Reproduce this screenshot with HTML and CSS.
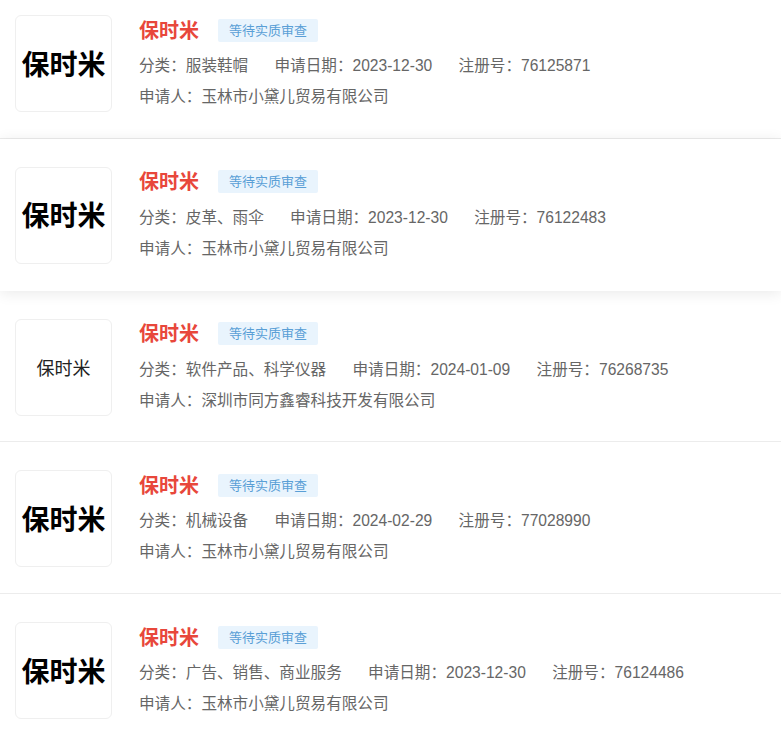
FILE: index.html
```html
<!DOCTYPE html>
<html lang="zh-CN">

<head>
    <meta charset="UTF-8">
    <meta name="viewport" content="width=device-width, initial-scale=1.0">
    <title>商标列表</title>
    <link rel="stylesheet" href="styles.css">
</head>

<body>

    <ul class="tm-list">
        <li class="tm-item">
            <div class="tm-logo tm-logo-bold">保时米</div>
            <div class="tm-info">
                <div class="tm-head">
                    <span class="tm-name">保时米</span>
                    <span class="tm-status">等待实质审查</span>
                </div>
                <div class="tm-meta">
                    <span>分类：服装鞋帽</span>
                    <span>申请日期：2023-12-30</span>
                    <span>注册号：76125871</span>
                </div>
                <div class="tm-meta">
                    <span>申请人：玉林市小黛儿贸易有限公司</span>
                </div>
            </div>
        </li>

        <li class="tm-item hover">
            <div class="tm-logo tm-logo-bold">保时米</div>
            <div class="tm-info">
                <div class="tm-head">
                    <span class="tm-name">保时米</span>
                    <span class="tm-status">等待实质审查</span>
                </div>
                <div class="tm-meta">
                    <span>分类：皮革、雨伞</span>
                    <span>申请日期：2023-12-30</span>
                    <span>注册号：76122483</span>
                </div>
                <div class="tm-meta">
                    <span>申请人：玉林市小黛儿贸易有限公司</span>
                </div>
            </div>
        </li>

        <li class="tm-item">
            <div class="tm-logo tm-logo-thin">保时米</div>
            <div class="tm-info">
                <div class="tm-head">
                    <span class="tm-name">保时米</span>
                    <span class="tm-status">等待实质审查</span>
                </div>
                <div class="tm-meta">
                    <span>分类：软件产品、科学仪器</span>
                    <span>申请日期：2024-01-09</span>
                    <span>注册号：76268735</span>
                </div>
                <div class="tm-meta">
                    <span>申请人：深圳市同方鑫睿科技开发有限公司</span>
                </div>
            </div>
        </li>

        <li class="tm-item">
            <div class="tm-logo tm-logo-bold">保时米</div>
            <div class="tm-info">
                <div class="tm-head">
                    <span class="tm-name">保时米</span>
                    <span class="tm-status">等待实质审查</span>
                </div>
                <div class="tm-meta">
                    <span>分类：机械设备</span>
                    <span>申请日期：2024-02-29</span>
                    <span>注册号：77028990</span>
                </div>
                <div class="tm-meta">
                    <span>申请人：玉林市小黛儿贸易有限公司</span>
                </div>
            </div>
        </li>

        <li class="tm-item">
            <div class="tm-logo tm-logo-bold">保时米</div>
            <div class="tm-info">
                <div class="tm-head">
                    <span class="tm-name">保时米</span>
                    <span class="tm-status">等待实质审查</span>
                </div>
                <div class="tm-meta">
                    <span>分类：广告、销售、商业服务</span>
                    <span>申请日期：2023-12-30</span>
                    <span>注册号：76124486</span>
                </div>
                <div class="tm-meta">
                    <span>申请人：玉林市小黛儿贸易有限公司</span>
                </div>
            </div>
        </li>
    </ul>

</body>

</html>
```

FILE: styles.css
```css
body {
    margin: 0;
    font-family: 'Liberation Sans', Arial, 'Noto Sans CJK SC', sans-serif;
    background-color: #fff;
    color: #666;
    overflow: hidden;
}

.tm-list {
    list-style: none;
    margin: -13px 0 0;
    padding: 0;
}

.tm-item {
    display: flex;
    align-items: flex-start;
    padding: 28px 0 25.75px 15px;
    border-bottom: 1px solid #ececec;
    background-color: #fff;
    position: relative;
}

.tm-item.hover {
    z-index: 1;
    border-bottom-color: transparent;
    box-shadow: 0 2px 14px rgba(0, 0, 0, 0.09);
}

.tm-logo {
    flex: none;
    width: 95px;
    height: 95px;
    border: 1px solid #efefef;
    border-radius: 6px;
    display: flex;
    align-items: center;
    justify-content: center;
    font-family: 'Noto Sans CJK SC', sans-serif;
    color: #000;
    box-sizing: content-box;
}

.tm-logo-bold {
    font-size: 28px;
    font-weight: 700;
    padding-bottom: 2px;
    height: 93px;
}

.tm-logo-thin {
    font-size: 18px;
    font-weight: 400;
    color: #222;
}

.tm-info {
    margin-left: 27px;
    padding-top: 3px;
}

.tm-head {
    display: flex;
    align-items: center;
    height: 24px;
}

.tm-name {
    font-family: 'Noto Sans CJK SC', sans-serif;
    font-size: 20px;
    font-weight: 700;
    color: #e8473b;
    margin-right: 19px;
    margin-top: -2px;
}

.tm-status {
    display: inline-block;
    width: 100px;
    height: 23px;
    line-height: 23px;
    text-align: center;
    font-size: 13px;
    color: #5a9fd6;
    background-color: #e9f4fd;
    border-radius: 2px;
}

.tm-meta {
    font-size: 15.6px;
    line-height: 31px;
    white-space: nowrap;
}

.tm-head + .tm-meta {
    margin-top: 8px;
}

.tm-meta span {
    margin-right: 22px;
}
```
